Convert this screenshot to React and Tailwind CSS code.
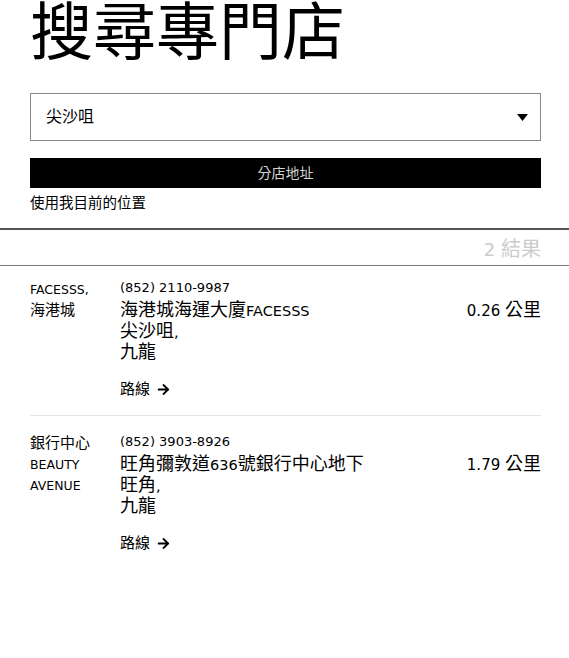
import { FaArrowRight } from 'react-icons/fa';

const font = { fontFamily: '"DejaVu Sans", "Noto Sans CJK TC", sans-serif' };

const STORES = [
  {
    name: ['FACESSS,', '海港城'],
    phone: '(852) 2110-9987',
    address: ['海港城海運大廈FACESSS', '尖沙咀,', '九龍'],
    distance: '0.26 公里',
  },
  {
    name: ['銀行中心', 'BEAUTY', 'AVENUE'],
    phone: '(852) 3903-8926',
    address: ['旺角彌敦道636號銀行中心地下', '旺角,', '九龍'],
    distance: '1.79 公里',
  },
];

// parent sets the chinese size; latin runs get a smaller size, like the original's font pairing
const Mixed = ({ text, latin }) => (
  <span>
    {text
      .split(/([\u3000-\u9fff\uff00-\uffef]+)/)
      .filter(Boolean)
      .map((part, i) =>
        /[\u3000-\u9fff\uff00-\uffef]/.test(part) ? (
          <span key={i}>{part}</span>
        ) : (
          <span key={i} className={latin}>{part}</span>
        )
      )}
  </span>
);

const StoreRow = ({ store, first, last }) => (
  <div
    className={`flex ${first ? 'pt-[13px]' : 'pt-[17px]'} pb-[17px] ${last ? '' : 'border-b border-[#e5e5e5]'}`}
  >
    <div className="w-[90px] shrink-0 text-[15px] leading-[21px] text-black">
      {store.name.map((n) => (
        <div key={n}>
          <Mixed text={n} latin="text-[12.5px] leading-none" />
        </div>
      ))}
    </div>
    <div className="flex-1">
      <div className="text-[13px] leading-[18px]">{store.phone}</div>
      <div className="mt-[2px] text-[18px] leading-[21px]">
        {store.address.map((a) => (
          <div key={a}>
            <Mixed text={a} latin="text-[14.5px] leading-none" />
          </div>
        ))}
      </div>
      <div className="mt-[18px] flex items-center gap-[7px] leading-[18px]">
        <span className="text-[15px]">路線</span>
        <FaArrowRight className="text-[13px]" />
      </div>
    </div>
    <div className="pt-[20px] text-[18px] leading-[21px] whitespace-nowrap">
      <Mixed text={store.distance} latin="text-[15px] leading-none" />
    </div>
  </div>
);

export default function App() {
  return (
    <div className="min-h-screen bg-white text-black" style={font}>
      <div className="px-[30px] pr-[28px]">
        <h1
          className="text-[63px] leading-[54px] font-normal"
          style={{ fontFamily: '"Noto Sans CJK TC", sans-serif' }}
        >
          搜尋專門店
        </h1>

        <div className="mt-[39px] flex h-[48px] items-center justify-between border border-[#8a8a8a] pl-[15px] pr-[12px]">
          <span className="text-[16px]">尖沙咀</span>
          <svg width="11" height="7" viewBox="0 0 11 7">
            <path d="M0 0 H11 L5.5 7 Z" fill="#000" />
          </svg>
        </div>

        <button className="mt-[17px] flex h-[30px] w-full items-center justify-center bg-black text-[14px] text-[#d4d4d4]">
          分店地址
        </button>

        <div className="mt-[6px] text-[14.5px] leading-[19px]">使用我目前的位置</div>
      </div>

      <div className="mt-[15px] border-t-2 border-[#555]" />
      <div className="flex h-[35px] items-center justify-end pt-[3px] pr-[28px] text-[20px] text-[#cccccc]">
        <Mixed text="2 結果" latin="text-[18px] leading-none" />
      </div>
      <div className="border-t border-[#777]" />

      <div className="px-[30px] pr-[28px]">
        {STORES.map((s, i) => (
          <StoreRow key={s.phone} store={s} first={i === 0} last={i === STORES.length - 1} />
        ))}
      </div>
    </div>
  );
}
